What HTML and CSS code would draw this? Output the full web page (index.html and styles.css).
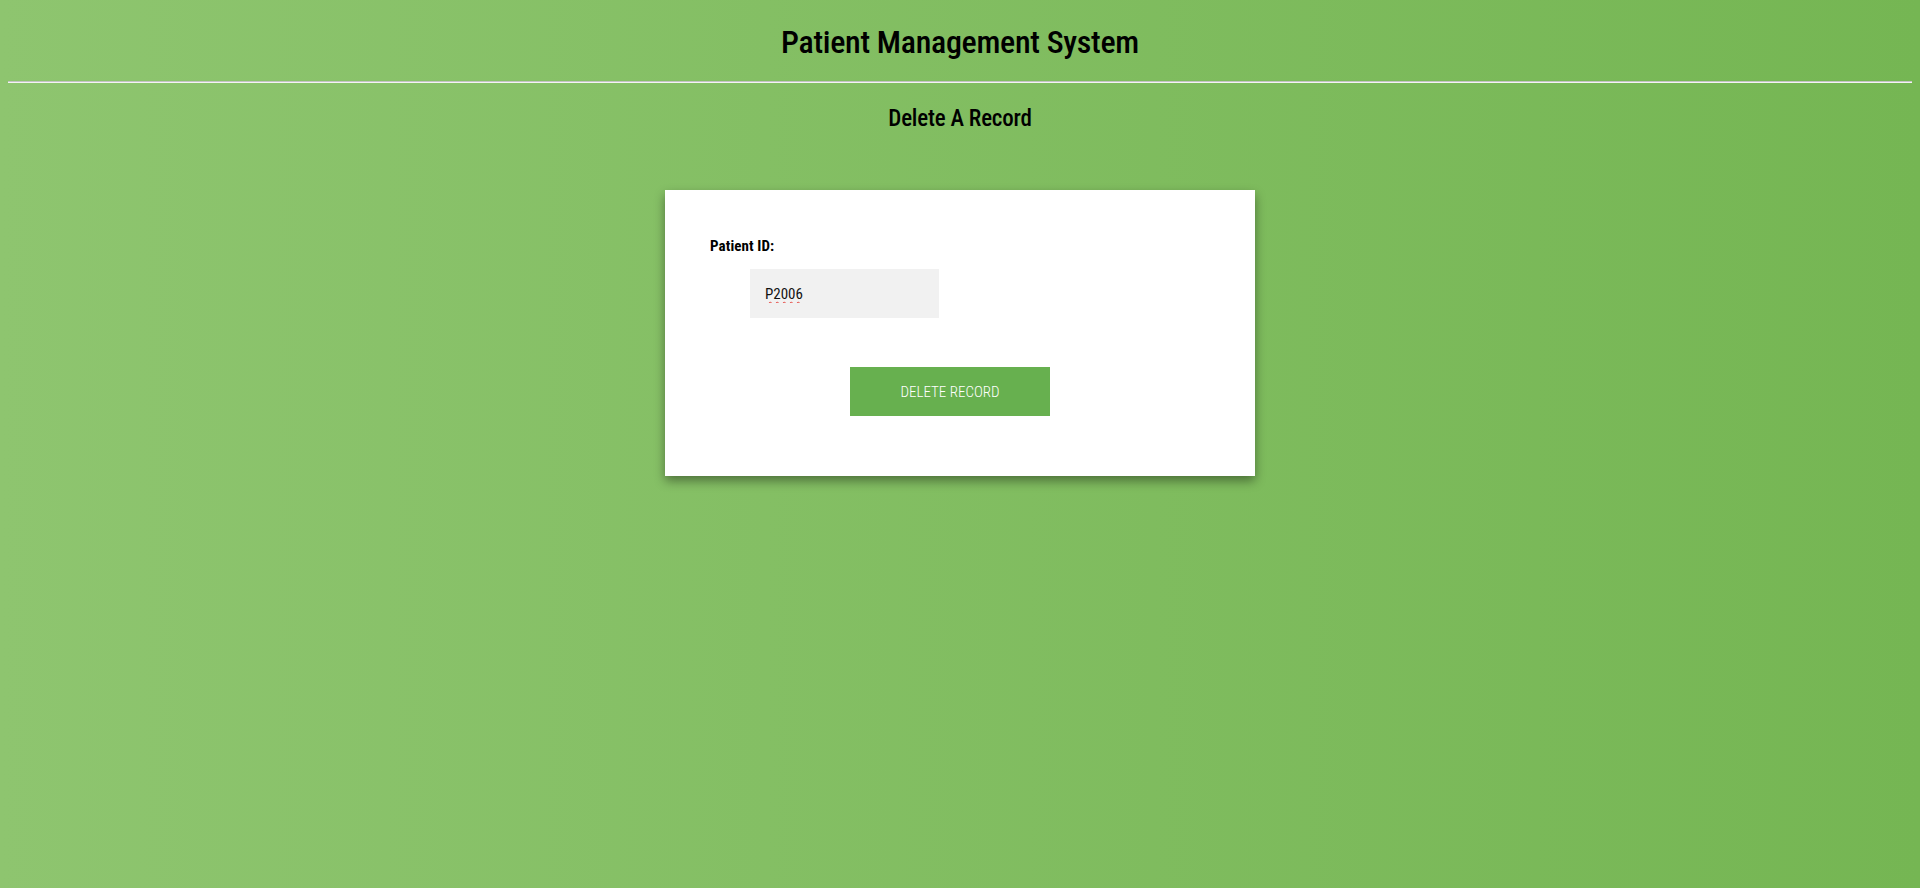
FILE: index.html
```html
<!DOCTYPE html>
<html lang="en">
<head>
<meta charset="utf-8">
<title>Patient Management System</title>
<link rel="stylesheet" href="styles.css">
</head>
<body>
  <h1 class="title">Patient Management System</h1>
  <hr class="divider">
  <h2 class="subtitle">Delete A Record</h2>
  <div class="stage">
    <form class="card">
      <label class="field-label" for="pid">Patient ID:</label>
      <input class="field-input" id="pid" type="text" value="P2006">
      <button class="btn-delete" type="button">Delete Record</button>
    </form>
  </div>
</body>
</html>
```
FILE: styles.css
```css
html {
  min-height: 100%;
  background: linear-gradient(to right, #8ec56f 0%, #75b653 100%);
}
body {
  margin: 8px;
  min-height: 872px;
  font-family: "Roboto", "Liberation Sans", sans-serif;
  font-stretch: 85%;
  color: #000;
}
.title {
  margin: 14px 0 19px;
  font-size: 32px;
  line-height: 40px;
  font-weight: 500;
  text-align: center;
  letter-spacing: -0.3px;
}
.divider {
  margin: 0;
  height: 0;
  border: 0;
  border-top: 1px solid #c4c4c4;
  border-bottom: 1px solid #f4f4f4;
}
.subtitle {
  margin: 21px 0 56px;
  font-size: 23px;
  line-height: 30px;
  font-weight: 500;
  text-align: center;
  letter-spacing: -0.2px;
}
.stage {
  display: flex;
  justify-content: center;
}
.card {
  width: 590px;
  height: 286px;
  box-sizing: border-box;
  background: #fff;
  padding: 46px 0 0 45px;
  display: flex;
  flex-direction: column;
  align-items: flex-start;
  box-shadow: 0 5px 10px rgba(0, 0, 0, 0.4);
}
.field-label {
  font-size: 15px;
  line-height: 20px;
  font-weight: 700;
  letter-spacing: 0.1px;
}
.field-input {
  margin: 13px 0 0 40px;
  width: 189px;
  height: 49px;
  box-sizing: border-box;
  border: 0;
  outline: 0;
  background: #f1f1f1;
  padding: 0 15px;
  font-family: "Roboto", "Liberation Sans", sans-serif;
  font-stretch: 85%;
  font-size: 15px;
  color: #111;
  text-decoration: underline wavy #e5453f;
  text-decoration-thickness: 1px;
  text-underline-offset: 2px;
}
.btn-delete {
  margin: 49px 0 0 140px;
  width: 200px;
  height: 49px;
  border: 0;
  background: #67b04f;
  color: #fff;
  font-family: "Roboto", "Liberation Sans", sans-serif;
  font-stretch: 85%;
  font-size: 15px;
  font-weight: 300;
  text-transform: uppercase;
  cursor: pointer;
}
```
